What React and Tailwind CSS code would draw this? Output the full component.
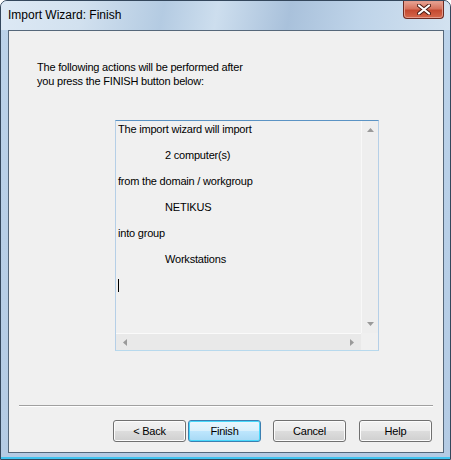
const ui = { fontFamily: '"Liberation Sans", Arial, sans-serif' };

function WizButton({ children, isDefault, className = '' }) {
  const base = 'block w-[73px] h-[22px] rounded-[3px] border text-[11px] leading-[20px] tracking-[-0.2px] text-black ';
  return (
    <button
      className={
        base +
        (isDefault
          ? 'border-[#3c7fb1] shadow-[inset_0_0_0_1px_#48d8fb] bg-[linear-gradient(180deg,#eaf6fd_0%,#d9f0fc_48%,#bee6fd_50%,#a7d9f5_100%)] '
          : 'border-[#707070] shadow-[inset_0_0_0_1px_#fcfcfc] bg-[linear-gradient(180deg,#f2f2f2_0%,#ebebeb_48%,#dddddd_50%,#cfcfcf_100%)] ') +
        className
      }
      style={ui}
    >
      {children}
    </button>
  );
}

function Arrow({ dir }) {
  const pts = {
    up: '0,4 3.5,0 7,4',
    down: '0,0 3.5,4 7,0',
    left: '4,0 0,3.5 4,7',
    right: '0,0 4,3.5 0,7',
  }[dir];
  const vertical = dir === 'up' || dir === 'down';
  return (
    <svg width={vertical ? 7 : 4} height={vertical ? 4 : 7}>
      <polygon points={pts} fill="#9a9a9a" />
    </svg>
  );
}

export default function App() {
  const lines = [
    { t: 'The import wizard will import' },
    { t: '' },
    { t: '2 computer(s)', indent: true },
    { t: '' },
    { t: 'from the domain / workgroup' },
    { t: '' },
    { t: 'NETIKUS', indent: true },
    { t: '' },
    { t: 'into group' },
    { t: '' },
    { t: 'Workstations', indent: true },
    { t: '' },
  ];

  return (
    <div className="w-[451px] h-[460px] flex flex-col rounded-t-[7px] border border-[#34475c] overflow-hidden bg-[linear-gradient(180deg,#bcd3ea_0%,#b4cbe4_100%)]">
      {/* title bar */}
      <div className="h-[29px] flex justify-between items-start bg-[linear-gradient(100deg,#dde9f5_0%,#d2e1ef_18%,#b4cbe2_36%,#cddeee_48%,#a9c1db_64%,#bfd4e9_80%,#d3e2f0_100%)]">
        <div className="self-center pl-[7px] pb-[1px] text-[12px] text-black" style={ui}>
          Import Wizard: Finish
        </div>
        <div className="mr-[6px] w-[41px] h-[18px] flex items-center justify-center rounded-b-[4px] border border-t-0 border-[#6d2a21] shadow-[inset_0_0_0_1px_#e39a8a] bg-[linear-gradient(180deg,#e8a696_0%,#d7735e_45%,#c44a31_55%,#d6684c_100%)]">
          <svg width="14" height="11" viewBox="0 0 14 11">
            <path d="M2 1.5 L12 9.5 M12 1.5 L2 9.5" stroke="#4a1a12" strokeWidth="4" strokeLinecap="round" />
            <path d="M2 1.5 L12 9.5 M12 1.5 L2 9.5" stroke="#ffffff" strokeWidth="2.2" strokeLinecap="round" />
          </svg>
        </div>
      </div>

      {/* client area */}
      <div className="ml-[7px] w-[436px] h-[423px] border border-[#55677a] bg-[#f0f0f0] flex flex-col">
        <div className="mt-[29px] ml-[28px] text-[11px] leading-[14px] tracking-[-0.2px] text-black" style={ui}>
          <div>The following actions will be performed after</div>
          <div>you press the FINISH button below:</div>
        </div>

        {/* read-only text box */}
        <div className="mt-[32px] ml-[106px] w-[264px] h-[231px] border border-[#b5cfe7] border-t-[#5b93c4] border-b-[#b7d9ed] grid grid-cols-[1fr_17px] grid-rows-[1fr_17px]">
          <div className="pt-[2px] pl-[2px] text-[11px] leading-[13px] tracking-[-0.2px] text-black overflow-hidden" style={ui}>
            {lines.map((l, i) => (
              <div key={i} className={l.indent ? 'pl-[47px] h-[13px]' : 'h-[13px]'}>
                {l.t}
              </div>
            ))}
            <div className="h-[13px] flex items-center">
              <div className="w-[1px] h-[13px] bg-black" />
            </div>
          </div>
          <div className="border-l border-[#f8f8f8] bg-[#eeeeee] flex flex-col items-center justify-between py-[7px]">
            <Arrow dir="up" />
            <Arrow dir="down" />
          </div>
          <div className="border-t border-[#fafafa] bg-[#e9e9e9] flex items-center justify-between px-[7px]">
            <Arrow dir="left" />
            <Arrow dir="right" />
          </div>
          <div className="bg-[#f0f0f0]" />
        </div>

        {/* separator */}
        <div className="mt-[54px] ml-[10px] w-[414px] h-[2px] border-t border-[#a0a0a0] border-b border-b-white" />

        {/* buttons */}
        <div className="mt-[13px] ml-[104px] flex items-start">
          <WizButton>&lt; Back</WizButton>
          <WizButton isDefault className="ml-[2px]">Finish</WizButton>
          <WizButton className="ml-[12px]">Cancel</WizButton>
          <WizButton className="ml-[13px]">Help</WizButton>
        </div>
      </div>

      {/* bottom frame */}
      <div className="flex-1 border-b-2 border-[#3fc3ef]" />
    </div>
  );
}
